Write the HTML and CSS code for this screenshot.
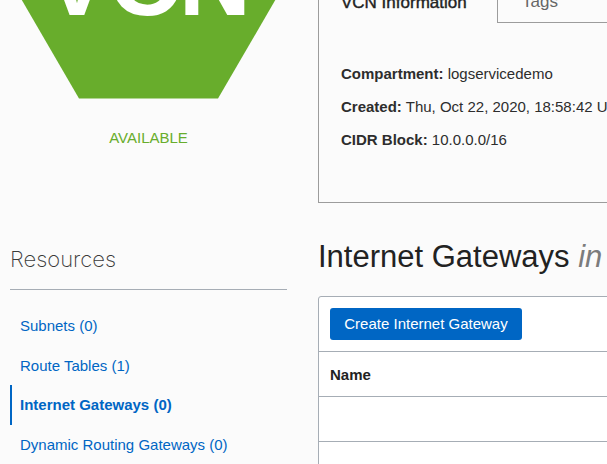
FILE: index.html
```html
<!DOCTYPE html>
<html lang="en">
<head>
<meta charset="utf-8">
<title>Virtual Cloud Network</title>
<link rel="stylesheet" href="styles.css">
</head>
<body>
<div class="page">
  <aside class="sidebar">
    <div class="status">
      <svg class="badge" viewBox="0 0 287 99" width="287" height="99" role="img" aria-label="VCN">
        <path d="M21.8 0H275.3L218 98.6H79Z" fill="#68ad2c"/>
        <text class="badge-text" x="43.5" y="15">VCN</text>
      </svg>
      <div class="state"><span>AVAILABLE</span></div>
    </div>
    <h2 class="resources-title"><span>Resources</span></h2>
    <nav class="resources">
      <a class="item subnets">Subnets (0)</a>
      <a class="item routes">Route Tables (1)</a>
      <a class="item active">Internet Gateways (0)</a>
      <a class="item drg">Dynamic Routing Gateways (0)</a>
    </nav>
  </aside>
  <main class="content">
    <section class="info">
      <div class="tabs">
        <div class="tab tab-active">VCN Information</div>
        <div class="tab tab-tags">Tags</div>
      </div>
      <div class="facts">
        <p><b class="k1">Compartment:</b> <span class="v1">logservicedemo</span></p>
        <p><b class="k2">Created:</b> <span class="v2">Thu, Oct 22, 2020, 18:58:42 UTC</span></p>
        <p><b class="k3">CIDR Block:</b> <span class="v3">10.0.0.0/16</span></p>
      </div>
    </section>
    <h1 class="title">Internet Gateways <i>in</i></h1>
    <section class="table">
      <div class="toolbar"><button class="create">Create Internet Gateway</button></div>
      <div class="row head">Name</div>
      <div class="row"></div>
      <div class="row last"></div>
    </section>
  </main>
</div>
</body>
</html>
```
FILE: styles.css
```css
* { box-sizing: border-box; }
body {
  margin: 0;
  background: #fbfbfb;
  color: #2d2d2d;
  font: 15px/20px "Liberation Sans", Arial, sans-serif;
}
.page {
  display: grid;
  grid-template-columns: 318px 700px;
  width: 607px;
  height: 464px;
  overflow: hidden;
}
.status { height: 240px; }
.badge { display: block; }
.badge-text {
  font: bold 100px "Liberation Sans", Arial, sans-serif;
  letter-spacing: -1.8px;
  fill: #fff;
}
.state {
  margin-top: 29px;
  padding-left: 10px;
  width: 287px;
  text-align: center;
  color: #68ad2c;
}
.resources-title {
  margin: 0 31px 16px 10px;
  height: 50px;
  border-bottom: 1px solid #a6adb5;
  font: 200 22px/38px Inter, "Liberation Sans", sans-serif;
  color: #3a3a3a;
}
.resources { margin-left: 10px; }
.item {
  display: block;
  height: 39.5px;
  padding-left: 10px;
  line-height: 40px;
  color: #0066c4;
}
.item.active {
  height: 40px;
  padding-left: 8px;
  border-left: 2px solid #0066c4;
  font-weight: bold;
}
.info {
  height: 203px;
  border: 1px solid #9c9c9c;
  border-top: 0;
}
.tabs { display: flex; height: 23px; }
.tab {
  font-size: 17px;
  line-height: 20px;
  margin-top: -7px;
}
.tab-active { width: 178px; padding-left: 22px; color: #222; -webkit-text-stroke: .4px #222; }
.tab-tags {
  flex: 1;
  padding-left: 24px;
  margin-top: 0;
  line-height: 4px;
  color: #666;
  border-left: 1px solid #9c9c9c;
  border-bottom: 1px solid #9c9c9c;
}
.facts { padding: 41px 0 0 22px; }
.facts p { margin: 0 0 13px; white-space: nowrap; }
.title {
  margin: 34px 0 19px;
  font-size: 31px;
  font-weight: 400;
  line-height: 40px;
  color: #222;
}
.title i { color: #7c7c7c; }
.table {
  border: 1px solid #a6adb5;
  border-radius: 3px;
  background: #fff;
}
.toolbar { height: 54px; padding: 11px; }
.create {
  display: block;
  width: 192px;
  height: 32px;
  padding: 0;
  border: 0;
  border-radius: 3px;
  background: #0066c4;
  color: #fff;
  font: inherit;
}
.row {
  height: 45px;
  padding-left: 11px;
  border-top: 1px solid #a6adb5;
  line-height: 45px;
}
.head { font-weight: bold; color: #222; }
.last { height: 60px; }
```
